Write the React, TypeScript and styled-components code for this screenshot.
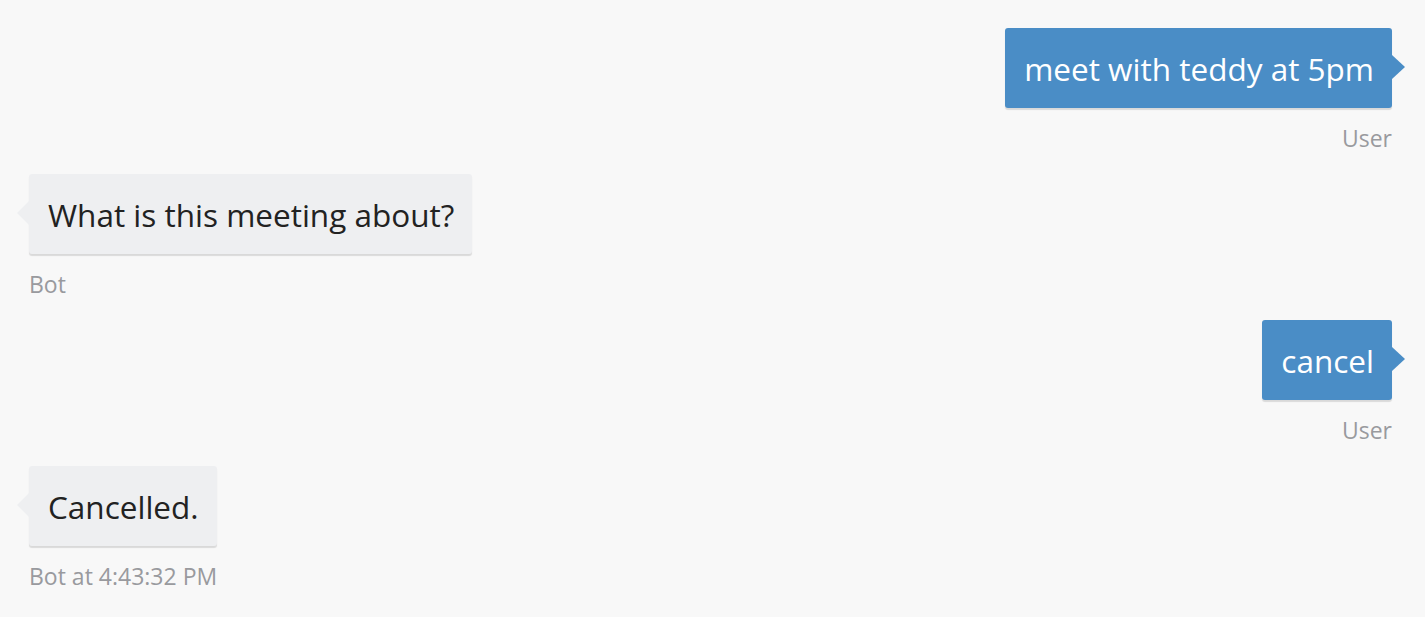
import React from "react";
import styled, { createGlobalStyle } from "styled-components";

const Global = createGlobalStyle`
  html, body { margin: 0; padding: 0; background: #f8f8f8; }
  body { font-family: "Open Sans", "Noto Sans", sans-serif; }
`;

const Chat = styled.div`
  display: flex;
  flex-direction: column;
  padding: 28px 33px 0 29px;
  width: 1425px;
  box-sizing: border-box;
  height: 617px;
  overflow: hidden;
`;

const Message = styled.div<{ $user?: boolean }>`
  display: flex;
  flex-direction: column;
  align-items: ${(p) => (p.$user ? "flex-end" : "flex-start")};
  margin-bottom: 23px;
`;

const Bubble = styled.div<{ $user?: boolean }>`
  position: relative;
  display: flex;
  align-items: center;
  height: 80px;
  box-sizing: border-box;
  padding: 0 18px 0 19px;
  border-radius: 3px;
  font-size: 31.5px;
  background: ${(p) => (p.$user ? "#4a8dc6" : "#eeeff1")};
  color: ${(p) => (p.$user ? "#ffffff" : "#222222")};
  box-shadow: 0 2px 1px rgba(0, 0, 0, 0.12);
  &::after {
    content: "";
    position: absolute;
    top: 27px;
    ${(p) => (p.$user ? "right: -13px;" : "left: -12px;")}
    border-top: 12px solid transparent;
    border-bottom: 12px solid transparent;
    ${(p) =>
      p.$user
        ? "border-left: 13px solid #4a8dc6;"
        : "border-right: 12px solid #eeeff1;"}
  }
`;

const Meta = styled.div`
  margin-top: 18px;
  font-size: 23px;
  line-height: 25px;
  color: #999a9e;
`;

const messages = [
  { user: true, text: "meet with teddy at 5pm", meta: "User" },
  { user: false, text: "What is this meeting about?", meta: "Bot" },
  { user: true, text: "cancel", meta: "User" },
  { user: false, text: "Cancelled.", meta: "Bot at 4:43:32 PM" },
];

export default function App() {
  return (
    <>
      <Global />
      <Chat>
        {messages.map((m, i) => (
          <Message key={i} $user={m.user}>
            <Bubble $user={m.user}>{m.text}</Bubble>
            <Meta>{m.meta}</Meta>
          </Message>
        ))}
      </Chat>
    </>
  );
}
